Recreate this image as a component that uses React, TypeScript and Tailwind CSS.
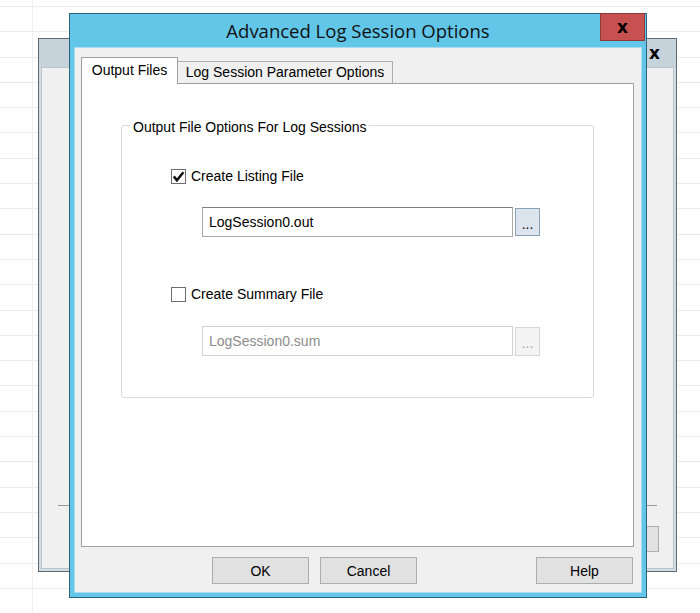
const gridRows = Array.from({ length: 24 }, (_, i) => i);

function Checkbox({ checked }: { checked?: boolean }) {
  return (
    <span className="flex h-[15px] w-[15px] shrink-0 items-center justify-center border border-[#6e6e6e] bg-white">
      {checked && (
        <svg width="13" height="13" viewBox="0 0 13 13">
          <path d="M1.8 6.4 L4.9 10.2 L11.4 2.2" fill="none" stroke="#111" strokeWidth="2.5" />
        </svg>
      )}
    </span>
  );
}

function FileField({ value, disabled }: { value: string; disabled?: boolean }) {
  return (
    <div className="ml-[31px] flex items-center gap-[2px]">
      <div
        className={
          disabled
            ? 'flex h-[30px] w-[311px] items-center border border-[#d2d2d2] bg-white pl-[6px] text-[#8c8c8c]'
            : 'flex h-[30px] w-[311px] items-center border border-[#a9a9a9] border-t-[#7c7c7c] bg-white pl-[6px] text-black'
        }
      >
        {value}
      </div>
      <div
        className={
          disabled
            ? 'flex h-[29px] w-[25px] items-center justify-center border border-[#d6d6d6] bg-[#f4f4f4] pt-[3px] text-[#a8a8a8]'
            : 'flex h-[28px] w-[25px] items-center justify-center border border-[#8aa2b6] bg-[#dce5ee] pt-[3px] text-black'
        }
      >
        ...
      </div>
    </div>
  );
}

function DialogButton({ label }: { label: string }) {
  return (
    <div className="flex h-[27px] w-[97px] items-center justify-center border border-[#adadad] bg-[#e1e1e1] text-black">
      {label}
    </div>
  );
}

export default function App() {
  return (
    <div className="relative h-[613px] w-[700px] overflow-hidden bg-white font-['Liberation_Sans',Arial,sans-serif] text-[14px] leading-[16px]">
      {/* desktop grid behind the windows */}
      <div className="absolute inset-0 flex flex-col pt-[6px]">
        {gridRows.map((i) => (
          <div key={i} className="h-[25.3px] shrink-0 border-t border-[#ececec]" />
        ))}
      </div>
      <div className="absolute top-0 bottom-0 left-[32px] w-px bg-[#efefef]" />

      {/* parent window */}
      <div className="absolute top-[38px] left-[38px] flex h-[534px] w-[639px] flex-col border border-[#5f6b74] bg-[#d3dce2]">
        <div className="flex h-[28px] shrink-0 items-center justify-end bg-[#c6d3db] pr-[16px]">
          <span className="font-['DejaVu_Sans',sans-serif] text-[17px] leading-none font-bold text-black">x</span>
        </div>
        <div className="mx-[2px] mb-[2px] flex flex-1 flex-col justify-end border border-[#b9c4cb] bg-[#f0f0f0]">
          <div className="mx-[16px] h-px bg-[#9a9a9a]" />
          <div className="mt-[20px] mb-[16px] flex justify-end pr-[14px]">
            <div className="h-[26px] w-[97px] border border-[#adadad] bg-[#e1e1e1]" />
          </div>
        </div>
      </div>

      {/* Advanced Log Session Options dialog */}
      <div className="absolute top-[13px] left-[69px] flex h-[585px] w-[578px] flex-col border border-[#2f6179] bg-[#62c6e8]">
        <div className="relative flex h-[33px] shrink-0 justify-center pt-[6px]">
          <span className="font-['Open_Sans',sans-serif] text-[18.5px] leading-[22px] text-[#111]">
            Advanced Log Session Options
          </span>
          <div className="absolute -top-px right-[1px] flex h-[28px] w-[45px] items-center justify-center border border-[#8d3a39] bg-[#c75050]">
            <span className="font-['DejaVu_Sans',sans-serif] text-[17px] leading-none font-bold text-black">x</span>
          </div>
        </div>

        <div className="mx-[4px] mb-[4px] flex flex-1 flex-col border border-[#a8dbee] bg-[#f0f0f0] pt-[9px] pr-[7px] pl-[6px]">
          {/* tabs */}
          <div className="flex h-[26px] items-end">
            <div className="relative z-10 -mb-px flex h-[27px] w-[97px] justify-center border border-b-0 border-[#a0a0a0] bg-white pt-[4px]">
              Output Files
            </div>
            <div className="flex h-[22px] w-[215px] justify-center border border-b-0 border-l-0 border-[#adadad] bg-[#f0f0f0] pt-[2px]">
              Log Session Parameter Options
            </div>
          </div>

          {/* tab page */}
          <div className="h-[464px] border border-[#a0a0a0] bg-white px-[39px] pt-[41px]">
            <div className="relative h-[273px] rounded-[3px] border border-[#dadada]">
              <span className="absolute -top-[7px] left-[8px] bg-white px-[3px] text-black">
                Output File Options For Log Sessions
              </span>
              <div className="flex flex-col pt-[42px] pl-[49px]">
                <div className="flex h-[16px] items-center gap-[5px]">
                  <Checkbox checked />
                  <span>Create Listing File</span>
                </div>
                <div className="mt-[23px]">
                  <FileField value="LogSession0.out" />
                </div>
                <div className="mt-[49px] flex h-[16px] items-center gap-[5px]">
                  <Checkbox />
                  <span>Create Summary File</span>
                </div>
                <div className="mt-[24px]">
                  <FileField value="LogSession0.sum" disabled />
                </div>
              </div>
            </div>
          </div>

          {/* dialog buttons */}
          <div className="mt-[10px] flex pr-[1px] pl-[131px]">
            <DialogButton label="OK" />
            <div className="ml-[11px]">
              <DialogButton label="Cancel" />
            </div>
            <div className="ml-auto">
              <DialogButton label="Help" />
            </div>
          </div>
        </div>
      </div>
    </div>
  );
}
